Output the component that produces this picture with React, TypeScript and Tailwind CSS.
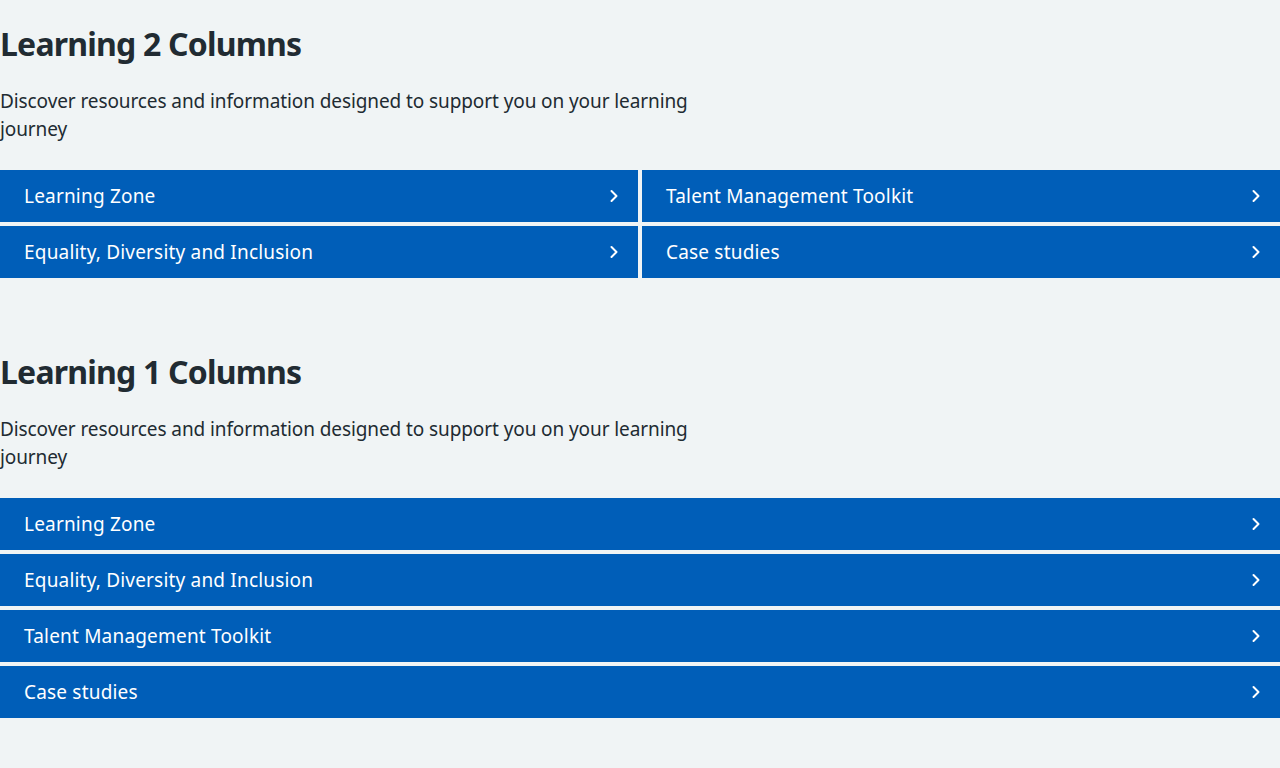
const LINKS_2COL = ['Learning Zone', 'Talent Management Toolkit', 'Equality, Diversity and Inclusion', 'Case studies']
const LINKS_1COL = ['Learning Zone', 'Equality, Diversity and Inclusion', 'Talent Management Toolkit', 'Case studies']

function Chevron() {
  return (
    <svg width="8" height="14" viewBox="0 0 8 14" fill="none" className="flex-none">
      <path d="M1.5 2l5 5-5 5" stroke="white" strokeWidth="2" strokeLinecap="round" strokeLinejoin="round" />
    </svg>
  )
}

function LinkRow({ label }: { label: string }) {
  return (
    <a
      href="#"
      className="flex h-[52px] items-center justify-between bg-[#005eb8] pl-6 pr-5 text-[19px] tracking-[0.01em] text-white hover:bg-[#004c95]"
    >
      <span>{label}</span>
      <Chevron />
    </a>
  )
}

function Section({ title, cols, items }: { title: string; cols: 1 | 2; items: string[] }) {
  return (
    <section>
      <h2 className="mb-[23px] text-[32px] font-bold leading-[40px] tracking-[-0.025em] text-[#212b32]">{title}</h2>
      <p className="mb-[27px] max-w-[700px] text-[19px] leading-[28px] tracking-[-0.005em] text-[#212b32]">
        Discover resources and information designed to support you on your learning journey
      </p>
      <div className={cols === 2 ? 'grid grid-cols-2 gap-1' : 'grid grid-cols-1 gap-1'}>
        {items.map((l) => (
          <LinkRow key={l} label={l} />
        ))}
      </div>
    </section>
  )
}

export default function App() {
  return (
    <div className="min-h-[768px] bg-[#f0f4f5] pt-6 font-['Noto_Sans',sans-serif]">
      <Section title="Learning 2 Columns" cols={2} items={LINKS_2COL} />
      <div className="h-[74px]" />
      <Section title="Learning 1 Columns" cols={1} items={LINKS_1COL} />
    </div>
  )
}
